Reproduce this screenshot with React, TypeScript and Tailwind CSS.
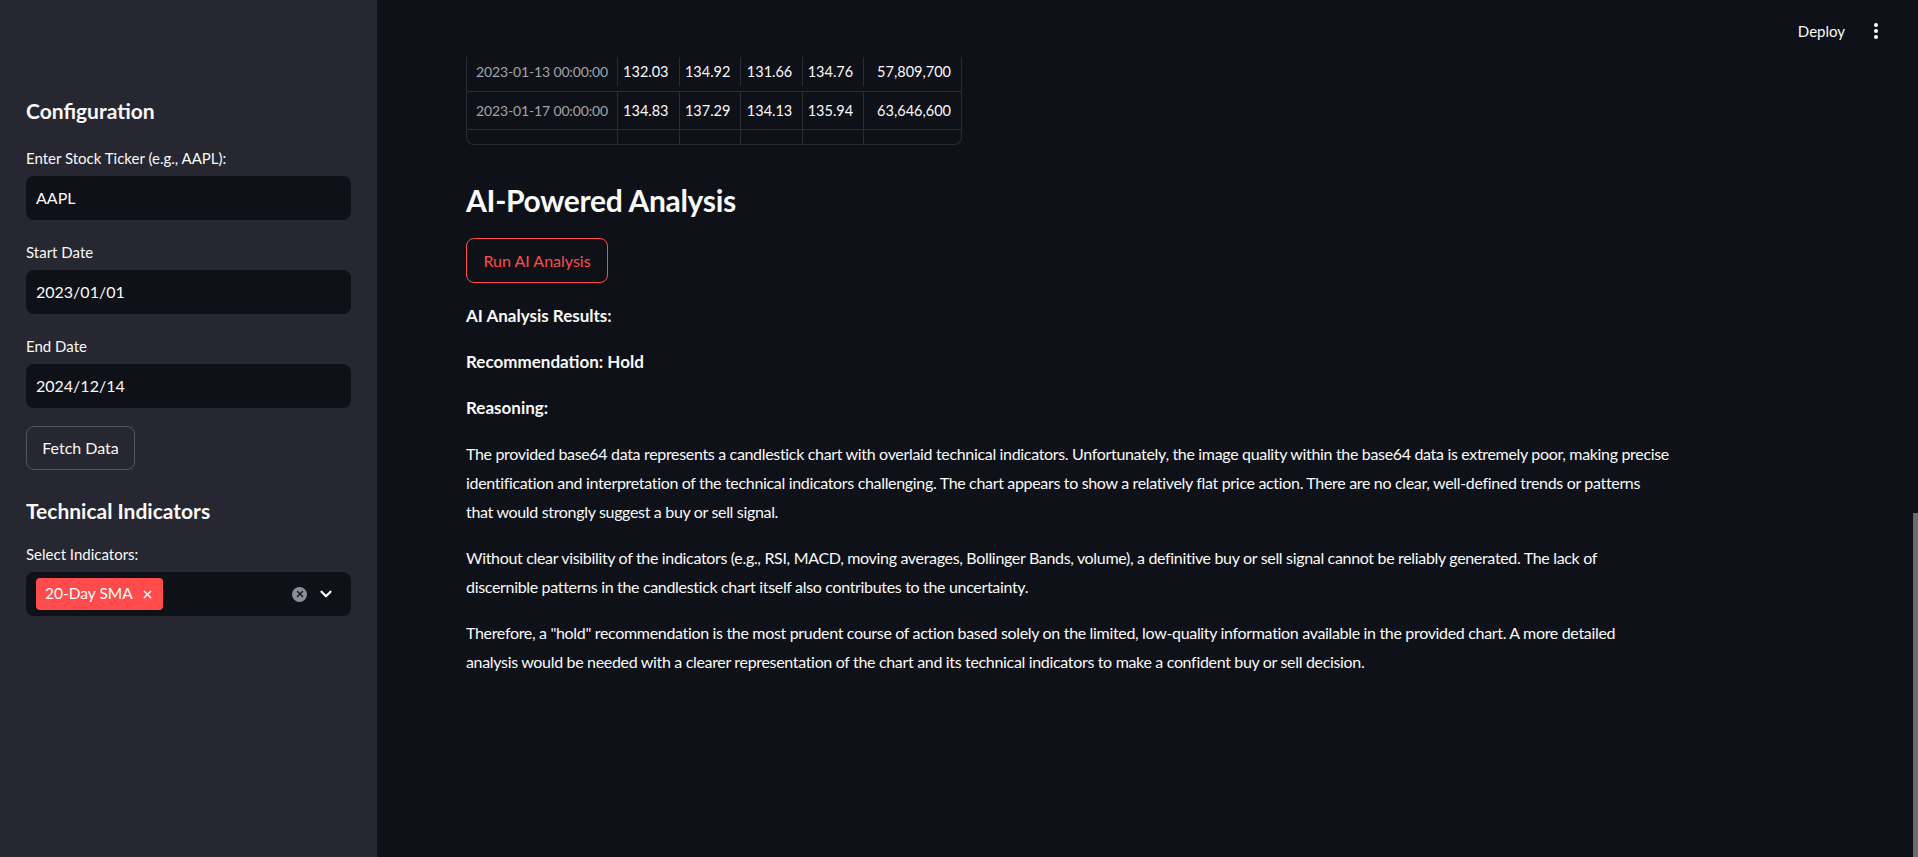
import { ChevronDown, X } from "lucide-react";

const rows = [
  ["2023-01-13 00:00:00", "132.03", "134.92", "131.66", "134.76", "57,809,700"],
  ["2023-01-17 00:00:00", "134.83", "137.29", "134.13", "135.94", "63,646,600"],
];

const colW = ["w-[150px]", "w-[62px]", "w-[62px]", "w-[62px]", "w-[61px]", "w-[98px]"];

function Field({ label, value }: { label: string; value: string }) {
  return (
    <div className="mt-[21px]">
      <div className="h-[22px] text-[15px] leading-[22px] text-[#fafafa]">{label}</div>
      <div className="mt-[7px] flex h-[44px] items-center rounded-lg bg-[#0e1117] px-[10px] text-[16px]">
        {value}
      </div>
    </div>
  );
}

function Sidebar() {
  return (
    <aside className="w-[377px] shrink-0 bg-[#262730] px-[26px] pt-[96px]">
      <h2 className="h-[30px] text-[21px] font-bold leading-[30px]">Configuration</h2>
      <Field label="Enter Stock Ticker (e.g., AAPL):" value="AAPL" />
      <Field label="Start Date" value="2023/01/01" />
      <Field label="End Date" value="2024/12/14" />
      <button className="mt-[18px] h-[44px] w-[109px] rounded-lg border border-[#55565e] text-[16px] text-[#fafafa]">
        Fetch Data
      </button>
      <h2 className="mt-[26px] h-[30px] text-[21px] font-bold leading-[30px]">Technical Indicators</h2>
      <div className="mt-[17px] h-[22px] text-[15px] leading-[22px]">Select Indicators:</div>
      <div className="mt-[7px] flex h-[44px] items-center rounded-lg bg-[#0e1117] pl-[10px] pr-[16px]">
        <span className="flex h-[32px] items-center gap-[8px] rounded bg-[#ff4b4b] pl-[9px] pr-[9px] text-[15.5px] text-white">
          20-Day SMA
          <X size={13} strokeWidth={2.5} />
        </span>
        <span className="ml-auto flex h-[15px] w-[15px] items-center justify-center rounded-full bg-[#8b8d97]">
          <X size={10} strokeWidth={3.5} className="text-[#1a1c24]" />
        </span>
        <ChevronDown size={18} strokeWidth={3} className="ml-[10px] text-white" />
      </div>
    </aside>
  );
}

function DataTable() {
  return (
    <div className="w-[496px] overflow-hidden rounded-b-lg border-x border-b border-[#2b2d35] text-[14.5px]">
      {rows.map((r, i) => (
        <div
          key={i}
          className={`flex border-b border-[#2b2d35] ${i === 0 ? "h-[35px] pb-[5px]" : "h-[38px]"}`}
        >
          {r.map((c, j) => (
            <div
              key={j}
              className={`${colW[j]} flex items-center whitespace-nowrap ${j === 0 ? "justify-start pl-[9px] text-[14px] tracking-[-0.01em] text-[#a3a4a8]" : "justify-end border-l border-[#2b2d35] pr-[10px]"}`}
            >
              {c}
            </div>
          ))}
        </div>
      ))}
      <div className="flex h-[14px]">
        {colW.map((w, j) => (
          <div key={j} className={`${w} ${j > 0 ? "border-l border-[#2b2d35]" : ""}`} />
        ))}
      </div>
    </div>
  );
}

export default function App() {
  return (
    <div
      className="flex h-[857px] w-full overflow-hidden bg-[#0e1117] text-[#fafafa]"
      style={{ fontFamily: "Lato, 'Open Sans', sans-serif" }}
    >
      <Sidebar />
      <main className="relative flex-1">
        <header className="flex h-[57px] items-start justify-end pr-[40px] pt-[20px]">
          <span className="text-[15px] leading-[22px]">Deploy</span>
          <span className="ml-[29px] mt-[3px] flex flex-col gap-[2px]">
            <i className="block h-[4px] w-[4px] rounded-full bg-white" />
            <i className="block h-[4px] w-[4px] rounded-full bg-white" />
            <i className="block h-[4px] w-[4px] rounded-full bg-white" />
          </span>
        </header>
        <div className="pl-[89px] pr-[180px]">
          <DataTable />
          <h2 className="mt-[33px] h-[44px] text-[30px] font-bold leading-[44px] tracking-[-0.01em]">
            AI-Powered Analysis
          </h2>
          <button className="mt-[16px] h-[45px] w-[142px] rounded-lg border border-[#ff4b4b] text-[16px] text-[#ff4b4b]">
            Run AI Analysis
          </button>
          <div className="mt-[18px] text-[16px] leading-[29px] tracking-[-0.0205em]">
            <p className="mb-[17px] text-[17px] font-bold tracking-normal">AI Analysis Results:</p>
            <p className="mb-[17px] text-[17px] font-bold tracking-normal">Recommendation: Hold</p>
            <p className="mb-[17px] text-[17px] font-bold tracking-normal">Reasoning:</p>
            <p className="mb-[17px]">
              The provided base64 data represents a candlestick chart with overlaid technical indicators.
              Unfortunately, the image quality within the base64 data is extremely poor, making precise
              <br />
              identification and interpretation of the technical indicators challenging. The chart appears to
              show a relatively flat price action. There are no clear, well-defined trends or patterns
              <br />
              that would strongly suggest a buy or sell signal.
            </p>
            <p className="mb-[17px]">
              Without clear visibility of the indicators (e.g., RSI, MACD, moving averages, Bollinger Bands,
              volume), a definitive buy or sell signal cannot be reliably generated. The lack of
              <br />
              discernible patterns in the candlestick chart itself also contributes to the uncertainty.
            </p>
            <p className="mb-[17px]">
              Therefore, a "hold" recommendation is the most prudent course of action based solely on the
              limited, low-quality information available in the provided chart. A more detailed
              <br />
              analysis would be needed with a clearer representation of the chart and its technical indicators
              to make a confident buy or sell decision.
            </p>
          </div>
        </div>
        <div className="absolute bottom-0 right-0 top-[513px] w-[5px] bg-[#6b6b6b]" />
      </main>
    </div>
  );
}
